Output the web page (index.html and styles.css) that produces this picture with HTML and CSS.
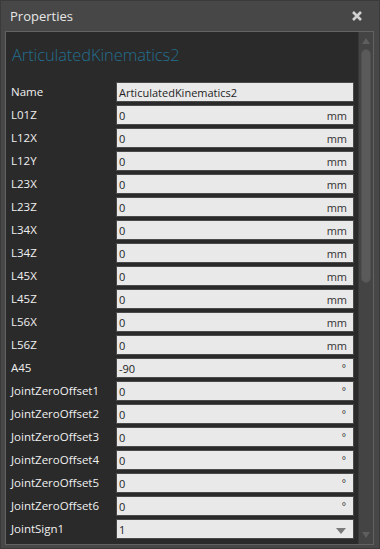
FILE: index.html
```html
<html><head>
	<meta charset="UTF-8">
	<link rel="stylesheet" href="styles.css">
</head>
<body>
	<div class="window">
		<div class="titlebar">
			<span class="title">Properties</span>
			<svg class="close" width="12" height="12" viewBox="0 0 12 12"><path d="M2 2 L10 10 M10 2 L2 10" stroke="#d0d0d0" stroke-width="2.6" stroke-linecap="butt"/></svg>
		</div>
		<div class="panel">
			<div class="content">
				<h1 class="heading">ArticulatedKinematics2</h1>
				<div class="rows">
					<div class="label">Name</div><div class="field"><span class="value">ArticulatedKinematics2</span></div>
					<div class="label">L01Z</div><div class="field"><span class="value">0</span><span class="unit">mm</span></div>
					<div class="label">L12X</div><div class="field"><span class="value">0</span><span class="unit">mm</span></div>
					<div class="label">L12Y</div><div class="field"><span class="value">0</span><span class="unit">mm</span></div>
					<div class="label">L23X</div><div class="field"><span class="value">0</span><span class="unit">mm</span></div>
					<div class="label">L23Z</div><div class="field"><span class="value">0</span><span class="unit">mm</span></div>
					<div class="label">L34X</div><div class="field"><span class="value">0</span><span class="unit">mm</span></div>
					<div class="label">L34Z</div><div class="field"><span class="value">0</span><span class="unit">mm</span></div>
					<div class="label">L45X</div><div class="field"><span class="value">0</span><span class="unit">mm</span></div>
					<div class="label">L45Z</div><div class="field"><span class="value">0</span><span class="unit">mm</span></div>
					<div class="label">L56X</div><div class="field"><span class="value">0</span><span class="unit">mm</span></div>
					<div class="label">L56Z</div><div class="field"><span class="value">0</span><span class="unit">mm</span></div>
					<div class="label">A45</div><div class="field"><span class="value">-90</span><span class="unit deg">°</span></div>
					<div class="label">JointZeroOffset1</div><div class="field"><span class="value">0</span><span class="unit deg">°</span></div>
					<div class="label">JointZeroOffset2</div><div class="field"><span class="value">0</span><span class="unit deg">°</span></div>
					<div class="label">JointZeroOffset3</div><div class="field"><span class="value">0</span><span class="unit deg">°</span></div>
					<div class="label">JointZeroOffset4</div><div class="field"><span class="value">0</span><span class="unit deg">°</span></div>
					<div class="label">JointZeroOffset5</div><div class="field"><span class="value">0</span><span class="unit deg">°</span></div>
					<div class="label">JointZeroOffset6</div><div class="field"><span class="value">0</span><span class="unit deg">°</span></div>
					<div class="label">JointSign1</div><div class="field"><span class="value">1</span><span class="arrow"></span></div>
				</div>
			</div>
			<div class="scrollbar">
				<div class="scroll-up"></div>
				<div class="thumb"></div>
				<div class="scroll-rest"></div>
				<div class="scroll-down"></div>
			</div>
		</div>
	</div>
</body></html>
```

FILE: styles.css
```css
* {
	box-sizing: border-box;
	font-family: 'Open Sans', 'Noto Sans', 'DejaVu Sans', sans-serif;
}
body {
	margin: 0;
	background-color: #474747;
}
.window {
	width: 380px;
	height: 549px;
	background-color: #474747;
	border: 1px solid #3a3a3a;
	display: flex;
	flex-direction: column;
	overflow: hidden;
}
.titlebar {
	height: 30px;
	flex: none;
	display: flex;
	align-items: center;
	justify-content: space-between;
	padding: 0 16px 0 9px;
}
.title {
	color: #e6e6e6;
	font-size: 13px;
}
.close {
	display: block;
}
.panel {
	flex: 1;
	margin: 0 5px 3px 4px;
	border: 1px solid #626262;
	background-color: #2a2a2a;
	display: flex;
	overflow: hidden;
}
.content {
	flex: 1;
	padding: 0 4px 0 5px;
	overflow: hidden;
}
.heading {
	margin: 14px 0 18px 1px;
	font-size: 16.5px;
	line-height: 18px;
	font-weight: 300;
	letter-spacing: -0.1px;
	color: #236f90;
	white-space: nowrap;
}
.rows {
	display: grid;
	grid-template-columns: 105px 1fr;
	grid-auto-rows: 20px;
	row-gap: 3px;
}
.label {
	color: #f0f0f0;
	font-size: 11.5px;
	line-height: 20px;
	white-space: nowrap;
}
.field {
	background-color: #e9e9e9;
	border: 1px solid #4a4a4a;
	display: flex;
	align-items: center;
	padding: 0 6px 0 2px;
	font-size: 11px;
	color: #1e1e1e;
}
.value {
	flex: 1;
	white-space: nowrap;
}
.unit {
	color: #333;
}
.unit.deg {
	font-size: 10px;
	margin-right: 1px;
}
.arrow {
	width: 0;
	height: 0;
	border-left: 5px solid transparent;
	border-right: 5px solid transparent;
	border-top: 6px solid #7a7a7a;
	margin: 3px 1px 0 0;
}
.scrollbar {
	width: 15px;
	flex: none;
	background-color: #444444;
	border-left: 1px solid #383838;
	display: flex;
	flex-direction: column;
	align-items: center;
}
.scroll-up {
	margin-top: 6px;
	width: 0;
	height: 0;
	border-left: 4px solid transparent;
	border-right: 4px solid transparent;
	border-bottom: 6px solid #5e5e5e;
}
.thumb {
	margin-top: 5px;
	width: 10px;
	height: 234px;
	border-radius: 5px;
	background-color: #5a5a5a;
	border: 1px solid #505050;
}
.scroll-rest {
	flex: 1;
}
.scroll-down {
	margin-bottom: 6px;
	width: 0;
	height: 0;
	border-left: 4px solid transparent;
	border-right: 4px solid transparent;
	border-top: 6px solid #5e5e5e;
}
```
